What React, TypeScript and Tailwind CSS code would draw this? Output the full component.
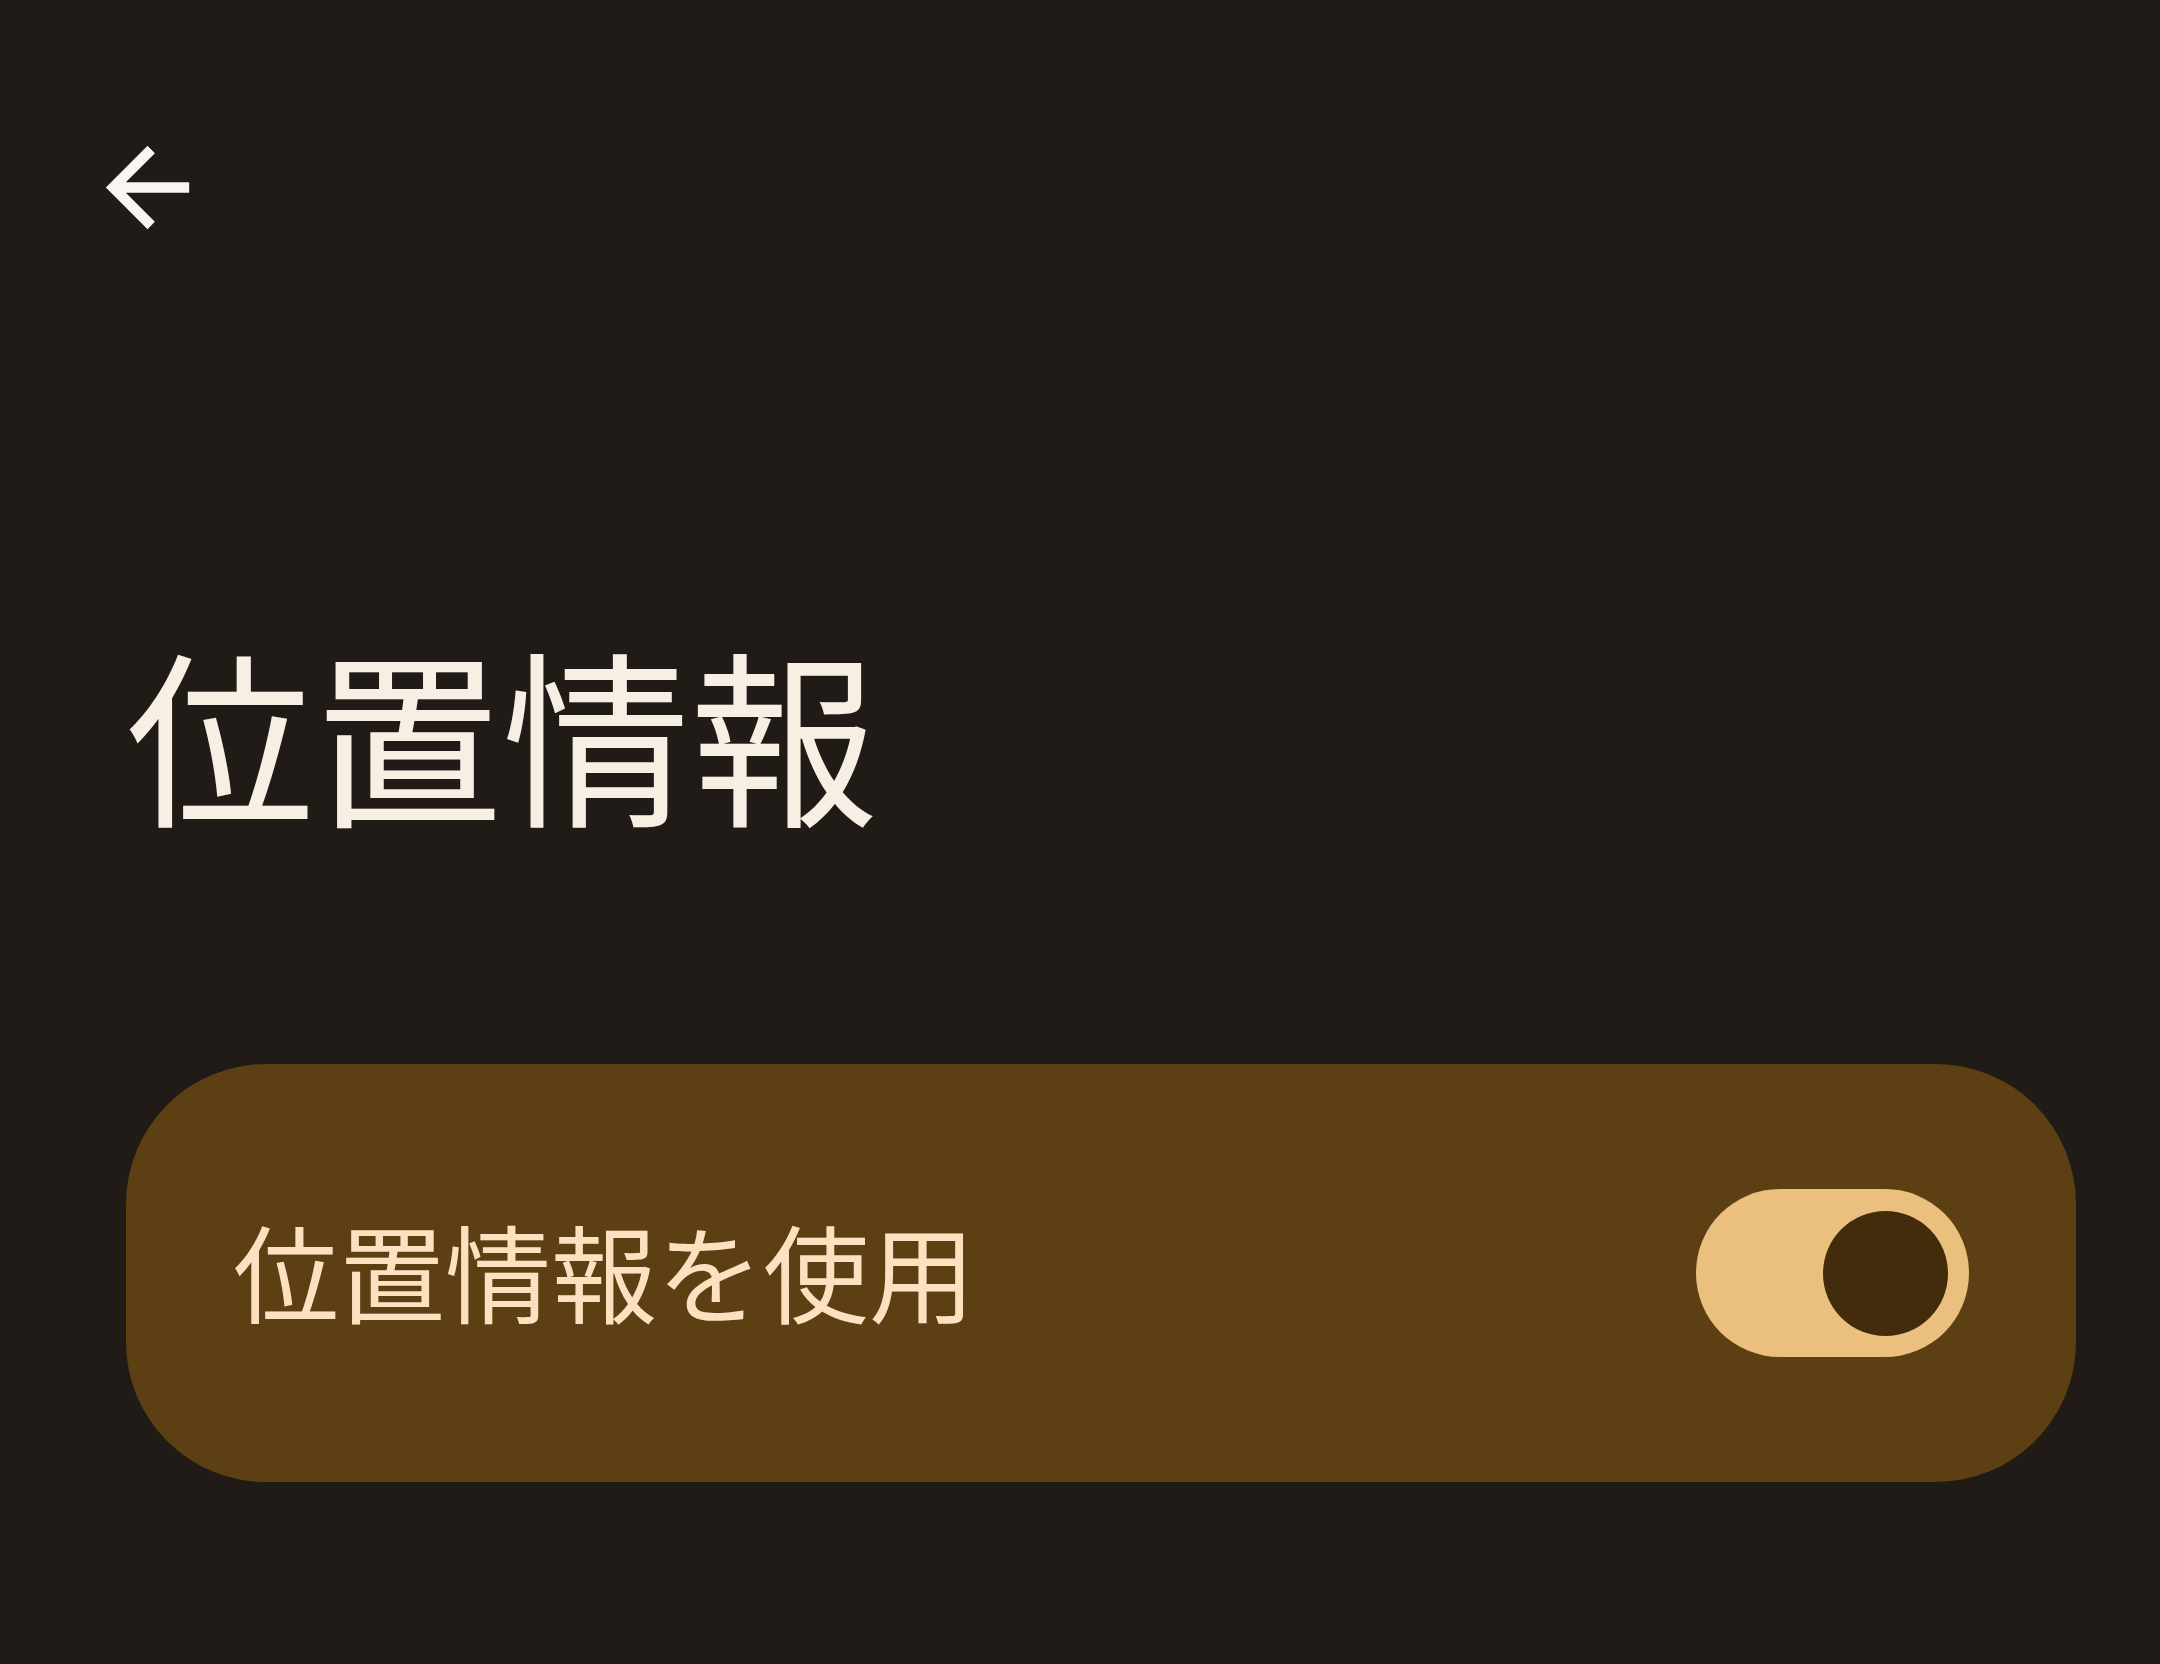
export default function App() {
  return (
    <div className="w-[2160px] h-[1664px] bg-[#201b16] font-['Noto_Sans_CJK_JP','Noto_Sans',sans-serif] overflow-hidden">
      {/* top bar */}
      <div className="pl-[85px] pt-[125px]">
        <button className="block w-[125px] h-[125px] text-[#f9f6f2]" aria-label="戻る">
          <svg viewBox="0 0 24 24" width="125" height="125" fill="currentColor">
            <path d="M20 11H7.83l5.59-5.59L12 4l-8 8 8 8 1.41-1.41L7.83 13H20v-2z" />
          </svg>
        </button>
      </div>

      <h1 className="mt-[386px] ml-[126px] text-[188px] leading-none font-normal text-[#f8efe4]">
        位置情報
      </h1>

      <div className="mt-[240px] ml-[126px] w-[1950px] h-[418px] rounded-[140px] bg-[#5c4013] flex items-center justify-between pl-[107px] pr-[107px]">
        <span className="text-[106px] leading-none pb-[8px] text-[#fde0bf]">位置情報を使用</span>
        <div className="w-[273px] h-[168px] rounded-full bg-[#ebc07e] flex items-center justify-end pr-[21px]">
          <div className="w-[125px] h-[125px] rounded-full bg-[#422c0b]" />
        </div>
      </div>
    </div>
  );
}
